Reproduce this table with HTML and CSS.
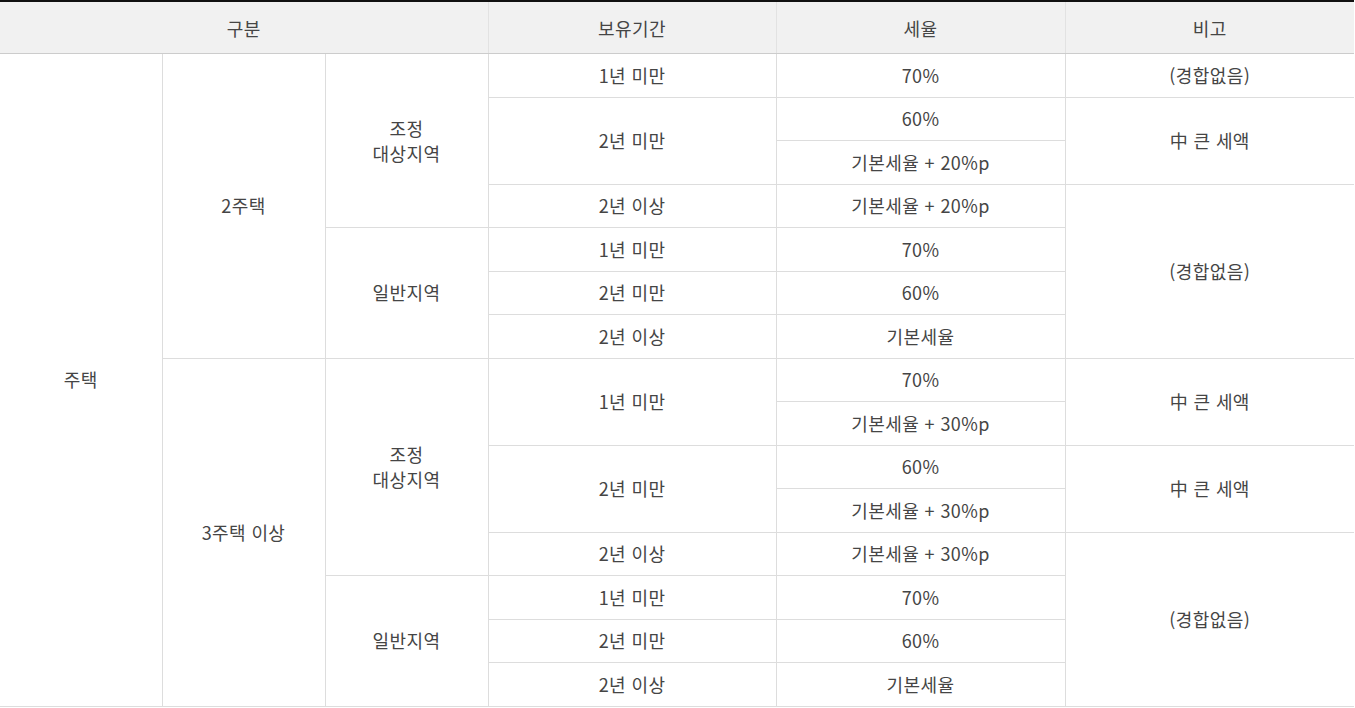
FILE: index.html
```html
<!DOCTYPE html>
<html lang="ko">
<head>
<meta charset="utf-8">
<title>양도소득세율</title>
<link rel="stylesheet" href="styles.css">
</head>
<body>
<table class="tax">
  <colgroup>
    <col class="c1"><col class="c2"><col class="c3"><col class="c4"><col class="c5"><col class="c6">
  </colgroup>
  <thead>
    <tr>
      <th colspan="3">구분</th>
      <th>보유기간</th>
      <th>세율</th>
      <th>비고</th>
    </tr>
  </thead>
  <tbody>
    <tr>
      <td rowspan="15">주택</td>
      <td rowspan="7">2주택</td>
      <td rowspan="4">조정<br>대상지역</td>
      <td>1년 미만</td>
      <td>70%</td>
      <td>(경합없음)</td>
    </tr>
    <tr>
      <td rowspan="2">2년 미만</td>
      <td>60%</td>
      <td rowspan="2">中 큰 세액</td>
    </tr>
    <tr>
      <td>기본세율 + 20%p</td>
    </tr>
    <tr>
      <td>2년 이상</td>
      <td>기본세율 + 20%p</td>
      <td rowspan="4">(경합없음)</td>
    </tr>
    <tr>
      <td rowspan="3">일반지역</td>
      <td>1년 미만</td>
      <td>70%</td>
    </tr>
    <tr>
      <td>2년 미만</td>
      <td>60%</td>
    </tr>
    <tr>
      <td>2년 이상</td>
      <td>기본세율</td>
    </tr>
    <tr>
      <td rowspan="8">3주택 이상</td>
      <td rowspan="5">조정<br>대상지역</td>
      <td rowspan="2">1년 미만</td>
      <td>70%</td>
      <td rowspan="2">中 큰 세액</td>
    </tr>
    <tr>
      <td>기본세율 + 30%p</td>
    </tr>
    <tr>
      <td rowspan="2">2년 미만</td>
      <td>60%</td>
      <td rowspan="2">中 큰 세액</td>
    </tr>
    <tr>
      <td>기본세율 + 30%p</td>
    </tr>
    <tr>
      <td>2년 이상</td>
      <td>기본세율 + 30%p</td>
      <td rowspan="4">(경합없음)</td>
    </tr>
    <tr>
      <td rowspan="3">일반지역</td>
      <td>1년 미만</td>
      <td>70%</td>
    </tr>
    <tr>
      <td>2년 미만</td>
      <td>60%</td>
    </tr>
    <tr>
      <td>2년 이상</td>
      <td>기본세율</td>
    </tr>
  </tbody>
</table>
</body>
</html>
```
FILE: styles.css
```css
html, body {
  margin: 0;
  padding: 0;
  background: #ffffff;
}

.tax {
  width: 1354px;
  border-collapse: collapse;
  table-layout: fixed;
  font-family: "Noto Sans CJK KR", "Noto Sans", sans-serif;
  font-size: 18px;
  letter-spacing: 0.4px;
  color: #454545;
  border-top: 2px solid #111111;
}

.c1 { width: 162px; }
.c2 { width: 163px; }
.c3 { width: 163px; }
.c4 { width: 288px; }
.c5 { width: 289px; }
.c6 { width: 289px; }

.tax th {
  height: 51px;
  padding: 0;
  background: #f1f1f1;
  font-weight: normal;
  text-align: center;
  vertical-align: middle;
  border-bottom: 1px solid #cccccc;
  border-left: 1px solid #e2e2e2;
  line-height: 22px;
}

.tax td {
  height: 42.5px;
  padding: 0;
  text-align: center;
  vertical-align: middle;
  border: 1px solid #dddddd;
  line-height: 25px;
}

.tax th:first-child,
.tax tbody tr:first-child td:first-child {
  border-left: none;
}

.tax th:last-child,
.tax td:last-child {
  border-right: none;
}
```
